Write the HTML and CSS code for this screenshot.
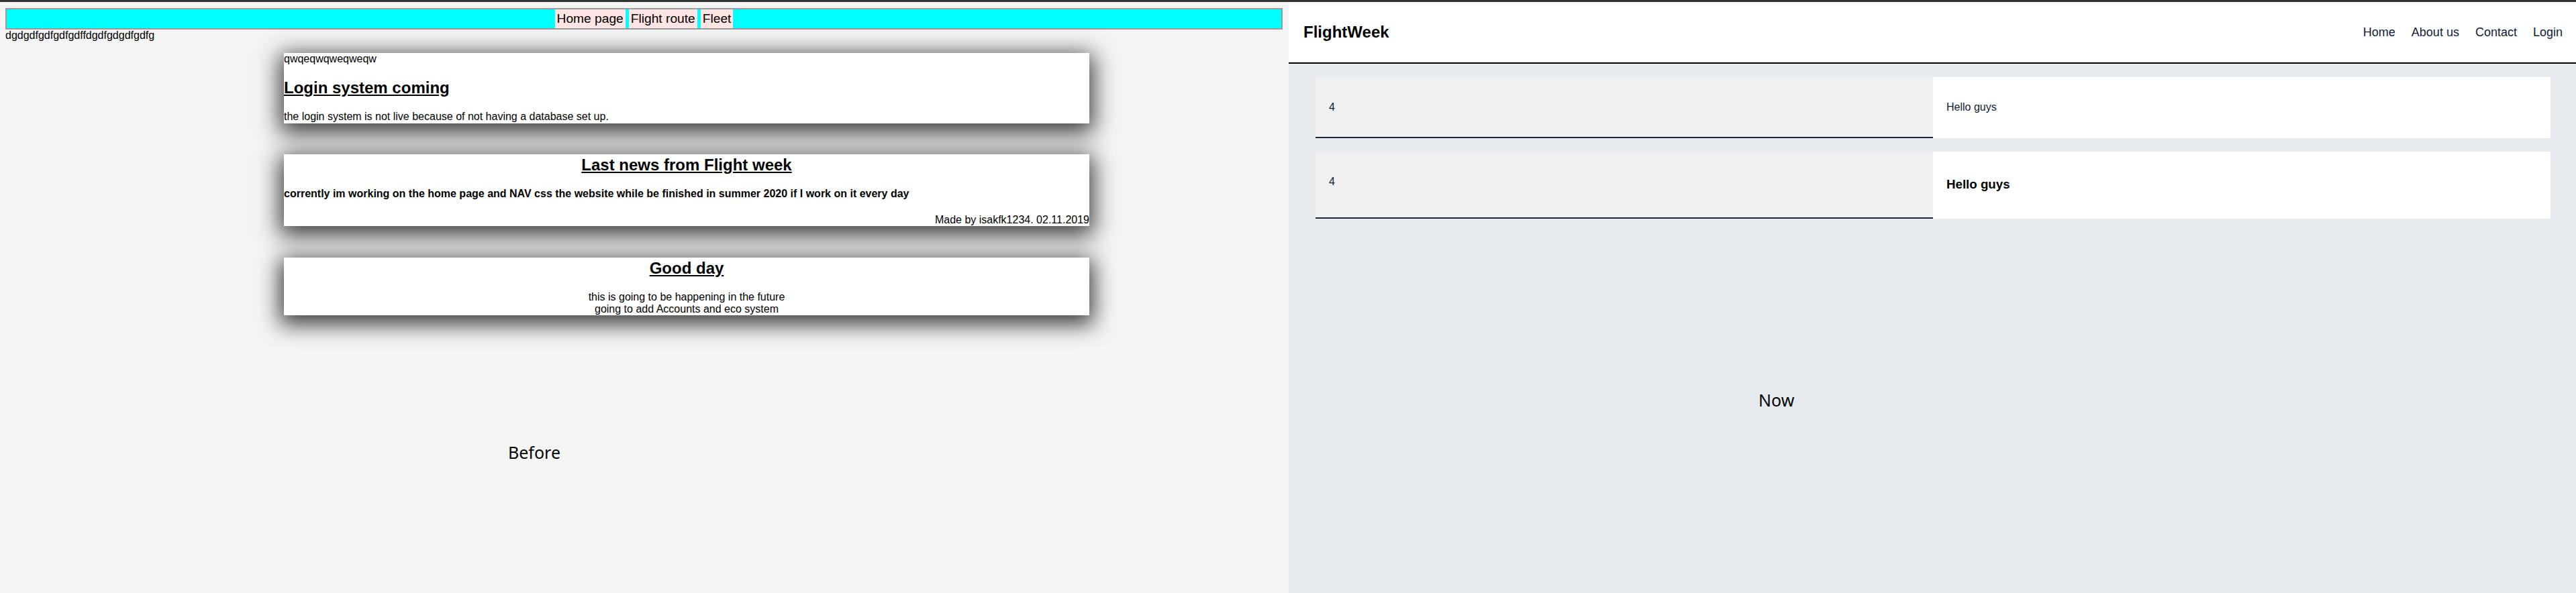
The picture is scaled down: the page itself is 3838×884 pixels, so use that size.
FILE: index.html
```html
<!DOCTYPE html>
<html lang="en">
<head>
<meta charset="utf-8">
<title>FlightWeek – Before / Now</title>
<link rel="stylesheet" href="styles.css">
</head>
<body>
<div class="topbar"></div>
<div class="panes">
  <section class="before">
    <nav class="oldnav">
      <a href="#">Home page</a>
      <a href="#">Flight route</a>
      <a href="#">Fleet</a>
    </nav>
    <p class="intro">dgdgdfgdfgdfgdffdgdfgdgdfgdfg</p>
    <div class="card card-first">
      <div>qwqeqwqweqweqw</div>
      <h2>Login system coming</h2>
      <p class="plain">the login system is not live because of not having a database set up.</p>
    </div>
    <div class="card">
      <h2 class="center">Last news from Flight week</h2>
      <h4>corrently im working on the home page and NAV css the website while be finished in summer 2020 if I work on it every day</h4>
      <p class="plain right">Made by isakfk1234. 02.11.2019</p>
    </div>
    <div class="card card-last">
      <h2 class="center">Good day</h2>
      <p class="plain center">this is going to be happening in the future<br>going to add Accounts and eco system</p>
    </div>
    <div class="label label-before">Before</div>
  </section>
  <section class="now">
    <header class="header">
      <div class="brand">FlightWeek</div>
      <nav class="mainnav">
        <a href="#">Home</a>
        <a href="#">About us</a>
        <a href="#">Contact</a>
        <a href="#">Login</a>
      </nav>
    </header>
    <main class="main">
      <div class="row row-short">
        <div class="cell cell-num">4</div>
        <div class="cell cell-text">Hello guys</div>
      </div>
      <div class="row row-tall">
        <div class="cell cell-num">4</div>
        <div class="cell cell-text cell-heading"><h3>Hello guys</h3></div>
      </div>
      <div class="label label-now">Now</div>
    </main>
  </section>
</div>
</body>
</html>
```

FILE: styles.css
```css
* { box-sizing: border-box; }

html, body {
  margin: 0;
  padding: 0;
}

body {
  width: 3838px;
  height: 884px;
  overflow: hidden;
  background: #f4f4f4;
  font-family: "Liberation Sans", Arial, sans-serif;
  font-size: 16px;
  color: #000;
}

.topbar {
  height: 3px;
  background: #333333;
}

.panes {
  display: flex;
  height: 881px;
}

/* ---------- Before ---------- */
.before {
  width: 1920px;
  flex: none;
  background: #f4f4f4;
  padding: 9px 9px 0 8px;
}

.oldnav {
  display: flex;
  justify-content: center;
  gap: 5px;
  height: 32px;
  border: 2px solid #9a9a9a;
  background: #00ffff;
}

.oldnav a {
  display: block;
  padding: 3px 3px;
  background: #ffe4e4;
  color: #000;
  text-decoration: none;
  font-size: 19.2px;
  line-height: 22px;
}

.intro {
  margin: 0 0 17px;
}

.card {
  width: 1200px;
  margin: 46px 0 0 415px;
  background: #fff;
  padding: 2px 0 0;
  box-shadow: 0 8px 32px 6px rgba(0, 0, 0, 0.75);
  display: flow-root;
}

.card-first {
  margin-top: 0;
  padding: 0 0 1px;
}

.card-last {
  margin-top: 47px;
}

.card h2 {
  font-size: 24px;
  font-weight: bold;
  text-decoration: underline;
  margin: 19.92px 0;
}

.card h2.center { margin-top: 0; }

.card h4 {
  font-size: 16px;
  font-weight: bold;
  margin: 0 0 21.3px;
}

.plain { margin: 0; }
.center { text-align: center; }
.right { text-align: right; }

.label {
  font-family: "Noto Sans", "Open Sans", sans-serif;
  font-size: 25px;
  line-height: 30px;
  color: #000;
}

.label-before {
  margin: 189px 0 0 749px;
}

/* ---------- Now ---------- */
.now {
  flex: 1;
  background: #e7eaef;
}

.header {
  height: 92px;
  background: #fff;
  border-bottom: 2px solid #000;
  display: flex;
  align-items: center;
  justify-content: space-between;
  padding: 0 20px 0 22px;
}

.brand {
  font-size: 24px;
  font-weight: bold;
  color: #000;
}

.mainnav {
  display: flex;
  gap: 24px;
}

.mainnav a {
  font-size: 18px;
  color: #101b35;
  text-decoration: none;
}

.main {
  padding: 20px 38px 0 40px;
}

.row {
  display: grid;
  grid-template-columns: 1fr 1fr;
  margin-bottom: 20px;
}

.row-short { height: 91px; }
.row-tall { height: 100px; margin-bottom: 0; }

.cell {
  padding: 36px 20px 0;
  color: #111a30;
}

.cell-num {
  background: #f0f0f0;
  border-bottom: 2px solid #1b2540;
}

.cell-text {
  background: #fff;
}

.cell-heading {
  padding-top: 38px;
}

.cell-text h3 {
  margin: 0;
  font-size: 18.72px;
  font-weight: bold;
  color: #000;
}

.label-now {
  margin: 255px 0 0 660px;
}
```
